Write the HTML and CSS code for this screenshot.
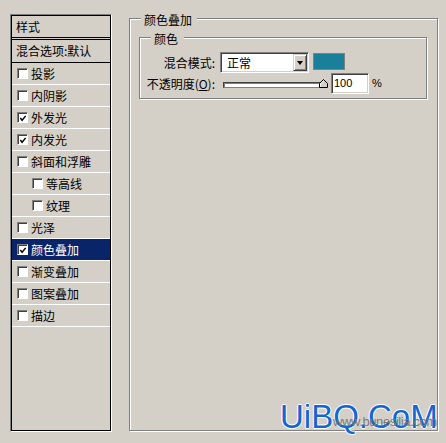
FILE: index.html
```html
<!DOCTYPE html>
<html lang="zh-CN">
<head>
<meta charset="utf-8">
<title>图层样式 - 颜色叠加</title>
<link rel="stylesheet" href="styles.css">
</head>
<body>
<div class="dialog">
  <div class="styles-panel">
    <div class="styles-list">
      <div class="list-head">样式</div>
      <div class="list-blend">混合选项:默认</div>
      <div class="item"><span class="cb"></span><span>投影</span></div>
      <div class="item"><span class="cb"></span><span>内阴影</span></div>
      <div class="item"><span class="cb checked"><svg viewBox="0 0 9 9" width="9" height="9"><path d="M1.5 4 L3.5 6.5 L7.5 1.5" fill="none" stroke="#000" stroke-width="1.6"/></svg></span><span>外发光</span></div>
      <div class="item"><span class="cb checked"><svg viewBox="0 0 9 9" width="9" height="9"><path d="M1.5 4 L3.5 6.5 L7.5 1.5" fill="none" stroke="#000" stroke-width="1.6"/></svg></span><span>内发光</span></div>
      <div class="item"><span class="cb"></span><span>斜面和浮雕</span></div>
      <div class="item sub"><span class="cb"></span><span>等高线</span></div>
      <div class="item sub"><span class="cb"></span><span>纹理</span></div>
      <div class="item"><span class="cb"></span><span>光泽</span></div>
      <div class="item selected"><span class="cb checked"><svg viewBox="0 0 9 9" width="9" height="9"><path d="M1.5 4 L3.5 6.5 L7.5 1.5" fill="none" stroke="#000" stroke-width="1.6"/></svg></span><span>颜色叠加</span></div>
      <div class="item"><span class="cb"></span><span>渐变叠加</span></div>
      <div class="item"><span class="cb"></span><span>图案叠加</span></div>
      <div class="item"><span class="cb"></span><span>描边</span></div>
    </div>
  </div>

  <div class="group outer">
    <div class="legend">颜色叠加</div>
    <div class="group inner">
      <div class="legend">颜色</div>
      <div class="form">
        <div class="label">混合模式:</div>
        <div class="controls">
          <div class="select">
            <span class="select-text">正常</span>
            <span class="select-btn"><span class="arrow"></span></span>
          </div>
          <div class="swatch"></div>
        </div>
        <div class="label">不透明度(<u>O</u>):</div>
        <div class="controls">
          <div class="slider">
            <div class="track"></div>
            <svg class="thumb" viewBox="0 0 9 9" width="9" height="9"><path d="M0.5 8.5 V4.5 L4.5 0.5 L8.5 4.5 V8.5 Z" fill="#d4d0c8" stroke="#000"/><path d="M1.5 7.5 V4.9 L4.5 1.9" fill="none" stroke="#fff"/></svg>
          </div>
          <div class="num">100</div>
          <div class="pct">%</div>
        </div>
      </div>
    </div>
  </div>

  <div class="watermark"><span class="wm-small">www.bunesilia.com</span><span class="wm-big">UiBQ.CoM</span></div>
</div>
</body>
</html>
```

FILE: styles.css
```css
html, body {
  margin: 0;
  padding: 0;
}
body {
  background: #d4d0c8;
  font-family: "Noto Sans CJK SC", "Liberation Sans", sans-serif;
  font-size: 12px;
  color: #000;
  width: 446px;
  height: 443px;
  overflow: hidden;
}
.dialog {
  position: relative;
  display: flex;
  align-items: flex-start;
  padding: 14px 0 0 10px;
  height: 443px;
  box-sizing: border-box;
}

/* left list */
.styles-panel {
  width: 102px;
  height: 418px;
  box-sizing: border-box;
  border: 1px solid;
  border-color: #808080 #fff #fff #808080;
  flex: none;
}
.styles-list {
  height: 100%;
  box-sizing: border-box;
  border: 1px solid #000;
}
.list-head {
  height: 21px;
  line-height: 21px;
  padding-left: 4px;
  border-bottom: 3px double #000;
}
.list-blend {
  height: 22px;
  line-height: 22px;
  padding-left: 4px;
  border-bottom: 1px solid #000;
  white-space: nowrap;
}
.item {
  display: flex;
  align-items: center;
  gap: 3px;
  height: 21px;
  line-height: 21px;
  padding-left: 5px;
  border-bottom: 1px solid #fff;
  white-space: nowrap;
}
.item.sub {
  padding-left: 20px;
}
.item.selected {
  background: #0a246a;
  color: #fff;
}
.cb {
  width: 11px;
  height: 11px;
  box-sizing: border-box;
  background: #fff;
  border: 1px solid;
  border-color: #808080 #fff #fff #808080;
  box-shadow: inset 1px 1px 0 #404040;
  display: flex;
  align-items: center;
  justify-content: center;
  flex: none;
}
.cb svg {
  display: block;
  margin: 1px 0 0 1px;
}

/* group boxes */
.group {
  position: relative;
  box-sizing: border-box;
  border: 1px solid #808080;
  box-shadow: inset 1px 1px 0 #fff, 1px 1px 0 #fff;
}
.group.outer {
  margin: 4px 0 0 17px;
  width: 309px;
  height: 413px;
}
.group.inner {
  margin: 18px 10px 0 9px;
  height: 62px;
  padding-top: 14px;
}
.legend {
  position: absolute;
  top: -5px;
  left: 11px;
  padding: 0 5px 0 3px;
  line-height: 12px;
  background: #d4d0c8;
}
.group.inner > .legend {
  padding: 0 6px 0 3px;
}

/* form */
.form {
  display: grid;
  grid-template-columns: 75px auto;
  grid-auto-rows: 21px;
  column-gap: 5px;
  align-items: center;
}
.label {
  text-align: right;
  line-height: 21px;
  white-space: nowrap;
}
.label u {
  text-decoration: underline;
  text-underline-offset: 1px;
}
.controls {
  display: flex;
  align-items: center;
  height: 21px;
}
.select {
  width: 89px;
  height: 21px;
  box-sizing: border-box;
  border: 1px solid;
  border-color: #808080 #fff #fff #808080;
  box-shadow: inset 1px 1px 0 #404040, inset -1px -1px 0 #d4d0c8;
  background: #fff;
  padding: 1px;
  display: flex;
  justify-content: space-between;
  align-items: stretch;
}
.select-text {
  padding-left: 5px;
  line-height: 17px;
}
.select-btn {
  width: 14px;
  box-sizing: border-box;
  background: #d4d0c8;
  border: 1px solid;
  border-color: #d4d0c8 #404040 #404040 #d4d0c8;
  box-shadow: inset 1px 1px 0 #fff, inset -1px -1px 0 #808080;
  display: flex;
  align-items: center;
  justify-content: center;
}
.arrow {
  width: 0;
  height: 0;
  border-left: 3.5px solid transparent;
  border-right: 3.5px solid transparent;
  border-top: 4px solid #000;
  margin-top: 1px;
}
.swatch {
  width: 32px;
  height: 17px;
  box-sizing: border-box;
  margin: -2px 0 0 4px;
  border: 1px solid #808080;
  background: #1a7f9b;
}
.slider {
  position: relative;
  width: 105px;
  height: 21px;
  margin-left: 3px;
}
.track {
  position: absolute;
  left: 0;
  top: 9px;
  width: 101px;
  height: 6px;
  box-sizing: border-box;
  border: 1px solid;
  border-color: #404040 #808080 #808080 #404040;
  box-shadow: inset 1px 1px 0 #808080;
  background: #fff;
}
.thumb {
  position: absolute;
  right: 0;
  top: 6px;
  display: block;
}
.num {
  width: 38px;
  height: 21px;
  box-sizing: border-box;
  margin-left: 3px;
  border: 1px solid;
  border-color: #808080 #fff #fff #808080;
  box-shadow: inset 1px 1px 0 #404040, inset -1px -1px 0 #d4d0c8;
  background: #fff;
  font-family: "Liberation Sans", sans-serif;
  font-size: 11px;
  line-height: 19px;
  padding-left: 2px;
}
.pct {
  margin-left: 3px;
  font-family: "Liberation Sans", sans-serif;
  font-size: 11px;
  line-height: 21px;
}

/* watermark */
.watermark {
  position: absolute;
  left: 280px;
  top: 400px;
  width: 166px;
  height: 43px;
}
.wm-big {
  position: relative;
  display: block;
  font-family: "Liberation Sans", sans-serif;
  font-size: 33px;
  line-height: 33px;
  color: #1466d2;
  white-space: nowrap;
  text-shadow: 1px 0 0 #fff, -1px 0 0 #fff, 0 1px 0 #fff, 0 -1px 0 #fff;
}
.wm-small {
  position: absolute;
  left: 53px;
  top: 15px;
  font-family: "Liberation Sans", sans-serif;
  font-size: 13px;
  line-height: 14px;
  letter-spacing: -0.4px;
  color: #7a7a7a;
  white-space: nowrap;
  z-index: 1;
}
```
